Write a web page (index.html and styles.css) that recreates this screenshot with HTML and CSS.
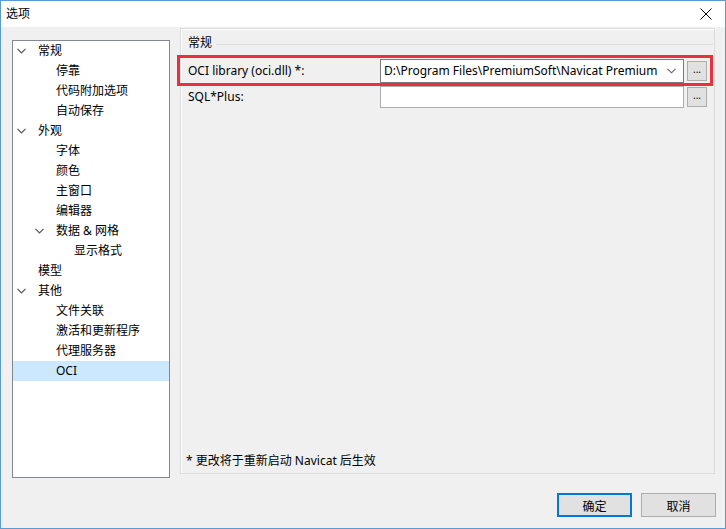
FILE: index.html
```html
<!DOCTYPE html>
<html lang="zh-CN">
<head>
<meta charset="utf-8">
<title>选项</title>
<link rel="stylesheet" href="styles.css">
</head>
<body>
<div class="window">
  <div class="titlebar">
    <span class="title">选项</span>
    <svg class="close" width="12" height="12" viewBox="0 0 12 12"><path d="M0.5 0.5 L11.5 11.5 M11.5 0.5 L0.5 11.5" stroke="#000" stroke-width="1" fill="none"/></svg>
  </div>
  <div class="content">
    <div class="main">
      <ul class="tree">
        <li class="item l0"><svg class="chev" width="9" height="6" viewBox="0 0 9 6"><path d="M0.5 0.8 L4.5 4.8 L8.5 0.8" stroke="#555" stroke-width="1.2" fill="none"/></svg><span>常规</span></li>
        <li class="item l1"><span>停靠</span></li>
        <li class="item l1"><span>代码附加选项</span></li>
        <li class="item l1"><span>自动保存</span></li>
        <li class="item l0"><svg class="chev" width="9" height="6" viewBox="0 0 9 6"><path d="M0.5 0.8 L4.5 4.8 L8.5 0.8" stroke="#555" stroke-width="1.2" fill="none"/></svg><span>外观</span></li>
        <li class="item l1"><span>字体</span></li>
        <li class="item l1"><span>颜色</span></li>
        <li class="item l1"><span>主窗口</span></li>
        <li class="item l1"><span>编辑器</span></li>
        <li class="item l1b"><svg class="chev" width="9" height="6" viewBox="0 0 9 6"><path d="M0.5 0.8 L4.5 4.8 L8.5 0.8" stroke="#555" stroke-width="1.2" fill="none"/></svg><span>数据 &amp; 网格</span></li>
        <li class="item l2"><span>显示格式</span></li>
        <li class="item l0 nochev"><span>模型</span></li>
        <li class="item l0"><svg class="chev" width="9" height="6" viewBox="0 0 9 6"><path d="M0.5 0.8 L4.5 4.8 L8.5 0.8" stroke="#555" stroke-width="1.2" fill="none"/></svg><span>其他</span></li>
        <li class="item l1"><span>文件关联</span></li>
        <li class="item l1"><span>激活和更新程序</span></li>
        <li class="item l1"><span>代理服务器</span></li>
        <li class="item l1 selected"><span>OCI</span></li>
      </ul>
      <div class="panel">
        <div class="group-head"><span class="legend">常规</span><span class="rule"></span></div>
        <div class="row highlight">
          <label class="lbl">OCI library (oci.dll) *:</label>
          <div class="combo"><span class="combo-text">D:\Program Files\PremiumSoft\Navicat Premium</span><svg class="combo-chev" width="9" height="6" viewBox="0 0 9 6"><path d="M0.5 0.8 L4.5 4.8 L8.5 0.8" stroke="#666" stroke-width="1.1" fill="none"/></svg></div>
          <button class="dots">...</button>
        </div>
        <div class="row second">
          <label class="lbl">SQL*Plus:</label>
          <div class="input"></div>
          <button class="dots">...</button>
        </div>
        <div class="spacer"></div>
        <div class="note">* 更改将于重新启动 Navicat 后生效</div>
      </div>
    </div>
    <div class="buttons">
      <button class="btn primary">确定</button>
      <button class="btn">取消</button>
    </div>
  </div>
</div>
</body>
</html>
```

FILE: styles.css
```css
* { box-sizing: border-box; }
html, body { margin: 0; padding: 0; }
body {
  width: 726px;
  height: 529px;
  overflow: hidden;
  font-family: "Noto Sans", "Noto Sans CJK SC", sans-serif;
  font-size: 12px;
  color: #000;
  background: #f0f0f0;
}
.window {
  width: 726px;
  height: 529px;
  border: 1px solid #5b9bd5;
  display: flex;
  flex-direction: column;
  background: #f0f0f0;
}
.titlebar {
  height: 26px;
  background: #fff;
  display: flex;
  align-items: center;
  justify-content: space-between;
  padding: 0 13px 0 5px;
  flex: none;
}
.title { font-size: 12px; line-height: 16px; margin-top: -1px; }
.close { display: block; margin-top: -1px; }
.content {
  flex: 1;
  display: flex;
  flex-direction: column;
  padding: 1px 9px 11px 11px;
}
.main {
  display: flex;
  gap: 10px;
  height: 446px;
}
.tree {
  list-style: none;
  margin: 12px 0 0 0;
  padding: 0;
  width: 158px;
  height: 438px;
  background: #fff;
  border: 1px solid #828790;
  flex: none;
}
.item {
  height: 20px;
  display: flex;
  align-items: center;
  white-space: nowrap;
  line-height: 20px;
}
.item span { display: block; }
.chev { display: block; flex: none; }
.l0 { padding-left: 4px; }
.l0 .chev { margin-right: 12px; }
.l0.nochev { padding-left: 25px; }
.l1 { padding-left: 43px; }
.l1b { padding-left: 22px; }
.l1b .chev { margin-right: 12px; }
.l2 { padding-left: 61px; }
.selected { background: #cce8ff; }
.panel {
  width: 535px;
  height: 446px;
  border: 1px solid #dcdcdc;
  box-shadow: inset 1px 1px 0 #fff;
  display: flex;
  flex-direction: column;
  padding: 6px 0 0 0;
}
.group-head {
  display: flex;
  align-items: center;
  height: 16px;
  padding-left: 7px;
}
.legend { line-height: 16px; padding-right: 4px; }
.rule { flex: 1; border-top: 1px solid #dcdcdc; margin-top: 2px; margin-right: 1px; }
.row {
  display: flex;
  align-items: center;
  padding-left: 7px;
}
.highlight {
  margin: 7px 4px 0 -1px;
  padding-left: 8px;
  height: 25px;
  outline: 3px solid #e8313c;
  outline-offset: 0px;
}
.second { margin-top: 3px; height: 22px; }
.lbl { width: 192px; flex: none; line-height: 16px; }
.combo {
  width: 304px;
  height: 24px;
  background: #fff;
  border: 1px solid #7a7a7a;
  display: flex;
  align-items: center;
  padding: 0 7px 0 3px;
  flex: none;
}
.combo-text {
  flex: 1;
  overflow: hidden;
  white-space: nowrap;
  line-height: 16px;
}
.combo-chev { display: block; flex: none; margin-left: 4px; }
.input {
  width: 304px;
  height: 22px;
  background: #fff;
  border: 1px solid #abadb3;
  flex: none;
}
.dots {
  width: 20px;
  height: 20px;
  margin-left: 3px;
  padding: 0 0 4px 0;
  border: 1px solid #adadad;
  background: #e1e1e1;
  font-family: "Noto Sans", sans-serif;
  font-size: 10px;
  line-height: 10px;
  color: #000;
  display: flex;
  align-items: center;
  justify-content: center;
}
.spacer { flex: 1; }
.note {
  padding: 0 0 2px 5px;
  line-height: 16px;
  height: 20px;
}
.buttons {
  display: flex;
  justify-content: flex-end;
  gap: 9px;
  margin-top: auto;
}
.btn {
  width: 75px;
  height: 24px;
  border: 1px solid #adadad;
  background: #e1e1e1;
  font-family: "Noto Sans CJK SC", sans-serif;
  font-size: 12px;
  color: #000;
  padding: 0;
}
.btn.primary {
  border: 2px solid #0078d7;
}
```
